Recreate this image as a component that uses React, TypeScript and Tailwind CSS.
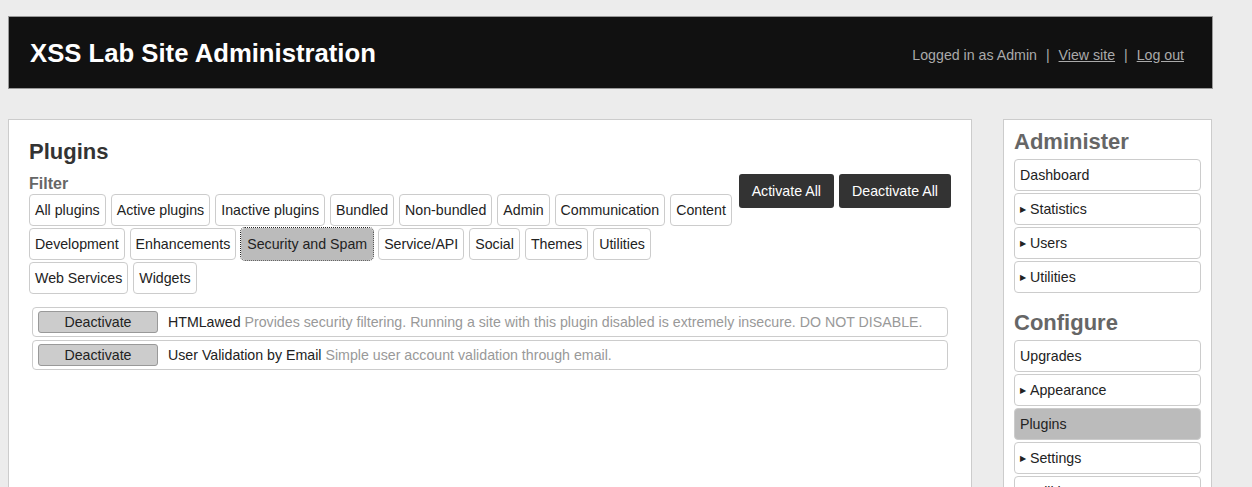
import React from "react"

const filters = [
  "All plugins",
  "Active plugins",
  "Inactive plugins",
  "Bundled",
  "Non-bundled",
  "Admin",
  "Communication",
  "Content",
  "Development",
  "Enhancements",
  "Security and Spam",
  "Service/API",
  "Social",
  "Themes",
  "Utilities",
  "Web Services",
  "Widgets",
]

const plugins = [
  {
    name: "HTMLawed",
    desc: "Provides security filtering. Running a site with this plugin disabled is extremely insecure. DO NOT DISABLE.",
  },
  { name: "User Validation by Email", desc: "Simple user account validation through email." },
]

function NavItem({ label, arrow, active }: { label: string; arrow?: boolean; active?: boolean }) {
  return (
    <div
      className={`h-[32px] flex items-center px-[5px] pt-[2px] border border-[#ccc] rounded-[4px] text-[14.2px] text-[#222] ${
        active ? "bg-[#bbb]" : "bg-white"
      }`}
    >
      {arrow && <span className="text-[8px] mr-[4px] leading-none">▶</span>}
      {label}
    </div>
  )
}

export default function App() {
  return (
    <div className="min-h-screen bg-[#ececec] pt-4 font-['Liberation_Sans',Arial,sans-serif] overflow-hidden">
      {/* Header */}
      <div className="ml-2 w-[1205px] h-[73px] bg-[#111] border border-[#999] flex items-center justify-between pl-[21px] pr-[28px]">
        <h1 className="text-[25.7px] font-bold text-white leading-none mt-[2px]">XSS Lab Site Administration</h1>
        <div className="text-[14.2px] text-[#aaa] mt-[6px]">
          Logged in as Admin <span className="mx-[5px]">|</span> <a className="underline">View site</a>
          <span className="mx-[5px]"> |</span> <a className="underline">Log out</a>
        </div>
      </div>

      <div className="ml-2 mt-[30px] w-[1205px] flex items-start gap-[31px]">
        {/* Main panel */}
        <div className="w-[964px] h-[400px] bg-white border border-[#ccc] pt-[19px] px-[20px]">
          <h2 className="text-[22px] font-bold text-[#333] leading-[26px] mb-[9px]">Plugins</h2>
          <div className="flex items-start justify-between">
            <div className="w-[708px]">
              <div className="text-[16px] font-bold text-[#666] leading-[20px]">Filter</div>
              <div className="flex flex-wrap gap-x-[5px] gap-y-[2px]">
                {filters.map((f) => (
                  <div
                    key={f}
                    className={`h-[32px] flex items-center px-[5px] pt-[2px] rounded-[4px] text-[14.2px] text-[#222] ${
                      f === "Security and Spam"
                        ? "bg-[#bbb] border border-[#bbb] outline-1 outline-dotted outline-[#222]"
                        : "bg-white border border-[#ccc]"
                    }`}
                  >
                    {f}
                  </div>
                ))}
              </div>
            </div>
            <div className="flex gap-[5px]">
              <div className="h-[34px] px-[13px] pt-[2px] flex items-center bg-[#333] text-white text-[14.2px] rounded-[3px]">
                Activate All
              </div>
              <div className="h-[34px] px-[13px] pt-[2px] flex items-center bg-[#333] text-white text-[14.2px] rounded-[3px]">
                Deactivate All
              </div>
            </div>
          </div>

          {/* Plugin list */}
          <div className="mt-[13px] mx-[3px] flex flex-col gap-[3px]">
            {plugins.map((p) => (
              <div
                key={p.name}
                className="h-[30px] flex items-center pl-[5px] border border-[#ccc] rounded-[4px] text-[14.2px]"
              >
                <div className="w-[120px] h-[22px] pt-[2px] flex items-center justify-center bg-[#ccc] border border-[#999] rounded-[3px] text-[#222]">
                  Deactivate
                </div>
                <span className="ml-[10px] mt-[2px] text-[#222]">{p.name}</span>
                <span className="ml-[4px] mt-[2px] text-[#999]">{p.desc}</span>
              </div>
            ))}
          </div>
        </div>

        {/* Sidebar */}
        <div className="w-[209px] h-[400px] bg-white border border-[#ccc] pt-[9px] px-[10px]">
          <h3 className="text-[22px] font-bold text-[#666] leading-[26px] mb-[4px]">Administer</h3>
          <div className="flex flex-col gap-[2px]">
            <NavItem label="Dashboard" />
            <NavItem label="Statistics" arrow />
            <NavItem label="Users" arrow />
            <NavItem label="Utilities" arrow />
          </div>
          <h3 className="text-[22px] font-bold text-[#666] leading-[26px] mt-[17px] mb-[4px]">Configure</h3>
          <div className="flex flex-col gap-[2px]">
            <NavItem label="Upgrades" />
            <NavItem label="Appearance" arrow />
            <NavItem label="Plugins" active />
            <NavItem label="Settings" arrow />
            <NavItem label="Utilities" arrow />
          </div>
        </div>
      </div>
    </div>
  )
}
